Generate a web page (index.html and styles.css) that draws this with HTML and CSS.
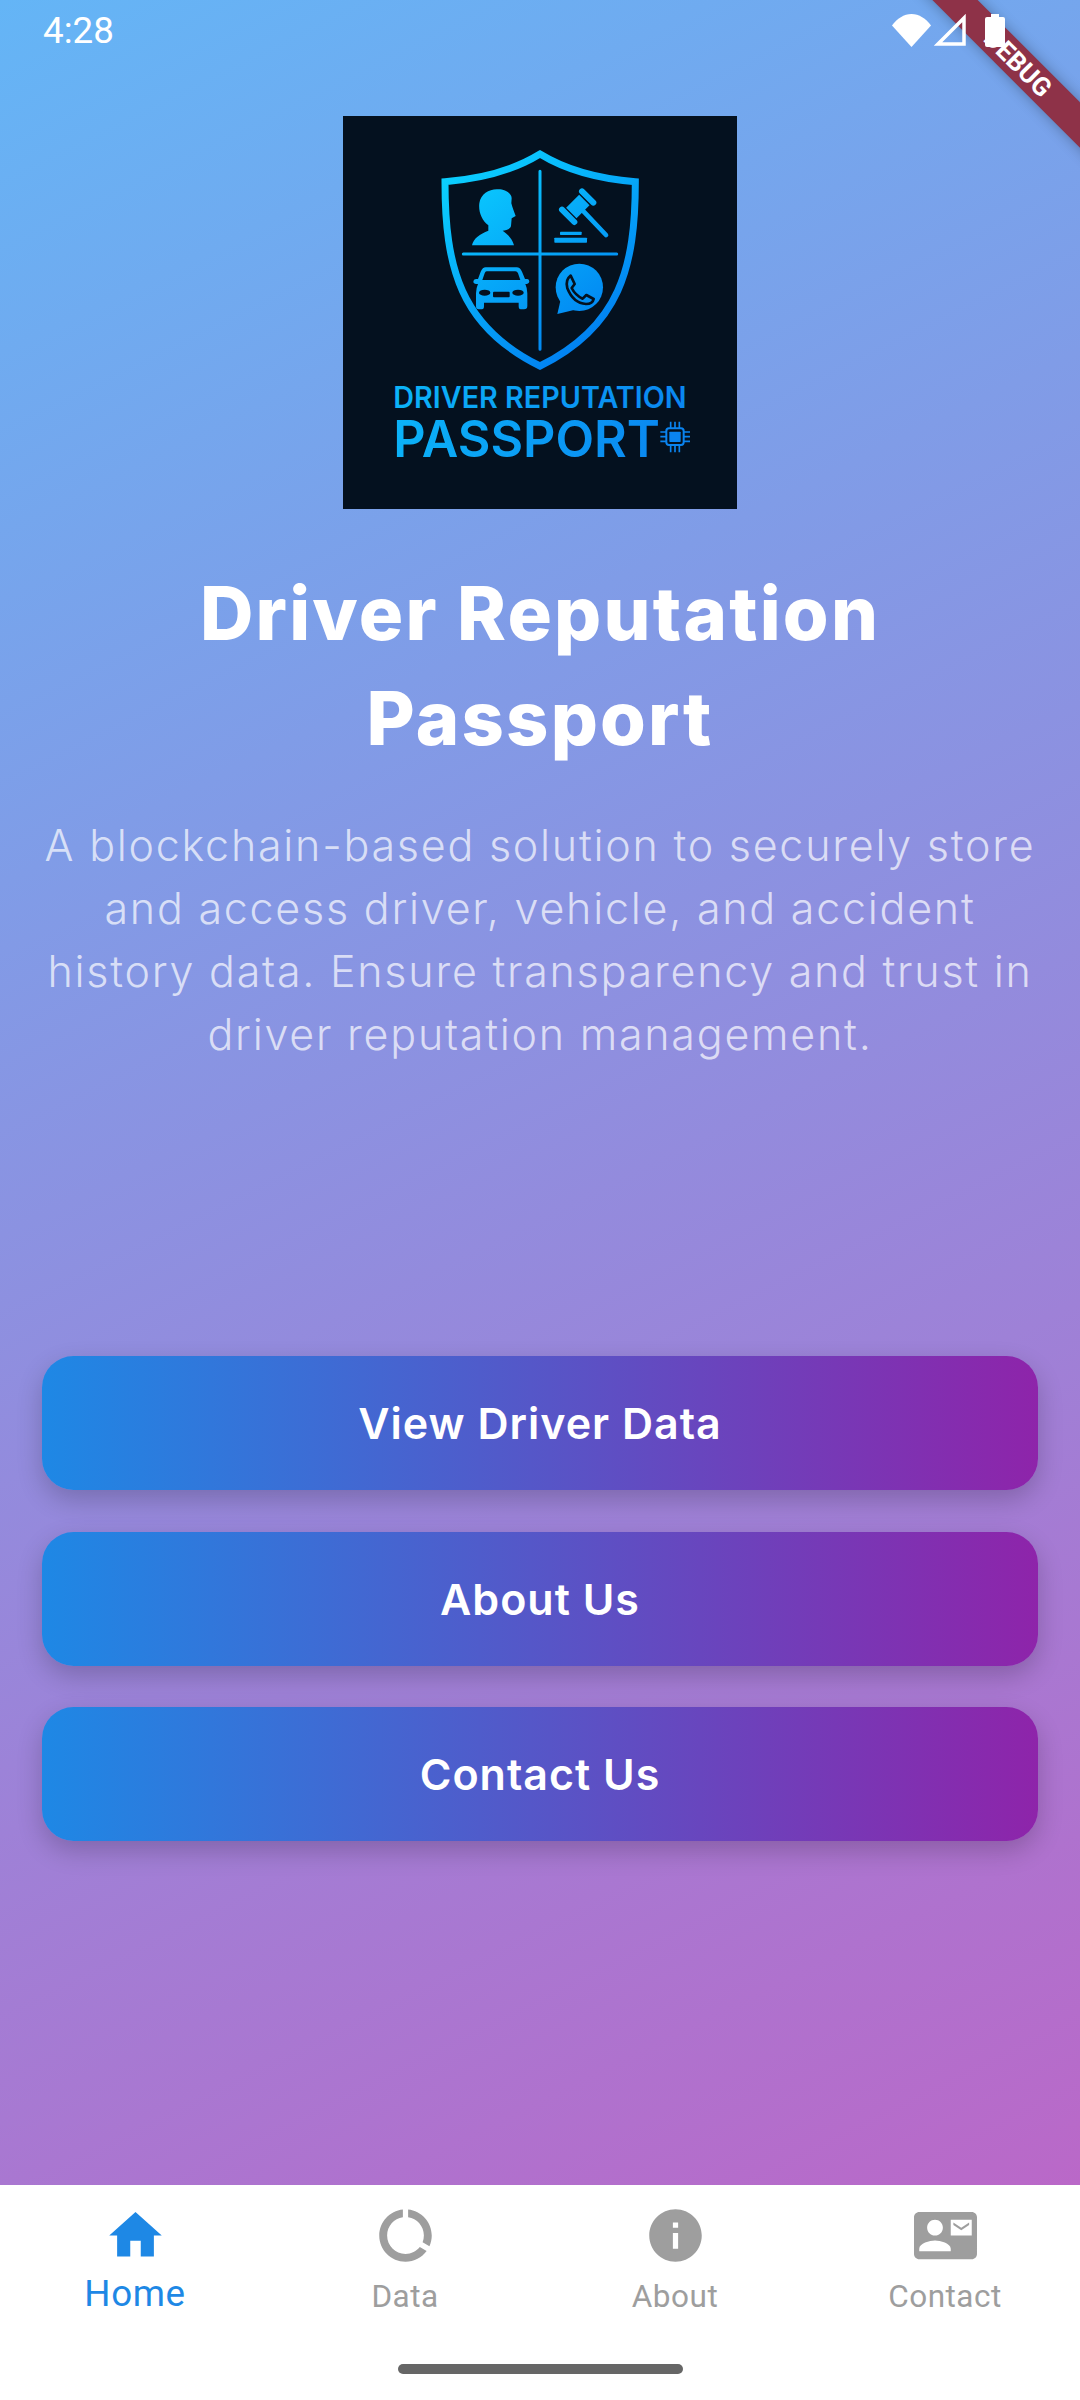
FILE: index.html
```html
<!DOCTYPE html>
<html lang="en">
<head>
<meta charset="utf-8">
<title>Driver Reputation Passport</title>
<link rel="stylesheet" href="styles.css">
</head>
<body>
<div class="app">
  <main class="main">
    <header class="status">
      <span class="time">4:28</span>
      <div class="status-icons">
        <svg class="ic-wifi" viewBox="0 0 39 33"><path d="M0 11.5C5 4.5 12 0 19.5 0S34 4.5 39 11.5L19.5 33Z"/></svg>
        <svg class="ic-signal" viewBox="0 0 32 32"><path d="M30 4V30H4Z"/></svg>
        <svg class="ic-battery" viewBox="0 0 20 33"><path d="M6 0H14V3H18Q20 3 20 5V31Q20 33 18 33H2Q0 33 0 31V5Q0 3 2 3H6Z"/></svg>
      </div>
    </header>
    <svg class="logo" viewBox="69 48 1182 1179" role="img" aria-label="Driver Reputation Passport logo">
      <defs>
        <linearGradient id="lg" gradientUnits="userSpaceOnUse" x1="420" y1="200" x2="860" y2="790">
          <stop offset="0" stop-color="#0bd0ff"/>
          <stop offset="1" stop-color="#0078f0"/>
        </linearGradient>
        <linearGradient id="tg" gradientUnits="userSpaceOnUse" x1="220" y1="860" x2="1100" y2="1070">
          <stop offset="0" stop-color="#0bb4f8"/>
          <stop offset="1" stop-color="#0a84f0"/>
        </linearGradient>
      </defs>
      <rect class="logo-bg" x="69" y="48" width="1182" height="1179"/>
      <path class="shield" d="M660 162C590 205 490 236 375 245C375 500 420 680 660 798C900 680 946 500 946 245C830 236 730 205 660 162Z"/>
      <path class="cross" d="M660 214V748M430 462H890"/>
      <path class="art" d="M456 436C460 415 480 402 505 392L505 376C485 360 475 335 478 310C482 280 510 266 535 268C555 268 575 280 575 295L574 310C578 325 582 335 587 348L575 355L573 378C570 390 555 390 548 392C558 400 576 412 582 436Z"/>
      <path class="gavel-bar" d="M786 274L820 308M726 329L763 366"/>
      <path class="gavel-body" d="M793 300L754 339"/>
      <path class="gavel-handle" d="M785 328L858 405"/>
      <rect class="art" x="720" y="395" width="65" height="10" rx="2"/>
      <rect class="art" x="703" y="413" width="98" height="15" rx="2"/>
      <path class="art" d="M497 502H590Q600 502 606 515L615 537H622Q628 538 628 545Q626 552 616 552Q622 565 622 580V618Q622 628 612 628H602Q596 628 596 618V608H492V618Q492 628 486 628H476Q468 628 468 618V580Q468 565 474 552Q460 552 460 545Q460 538 468 537H474L482 515Q488 502 497 502Z"/>
      <path class="cut" d="M500 514H586Q592 514 594 520L601 540H487L494 520Q496 514 500 514Z"/>
      <ellipse class="cut" cx="494" cy="578" rx="17" ry="9"/>
      <ellipse class="cut" cx="594" cy="578" rx="17" ry="9"/>
      <rect class="cut" x="519" y="575" width="50" height="17" rx="3"/>
      <circle class="art" cx="778" cy="562" r="71"/>
      <path class="art" d="M712 642L724 590L762 630Z"/>
      <path class="phone" d="M752 527L764 552L755 564Q766 586 788 596L799 585L821 597Q818 612 798 612Q760 610 742 565Q735 540 752 527Z"/>
      <text class="logo-t1" x="220" y="923" textLength="880" lengthAdjust="spacingAndGlyphs">DRIVER REPUTATION</text>
      <text class="logo-t2" x="220" y="1070" textLength="800" lengthAdjust="spacingAndGlyphs">PASSPORT</text>
      <rect class="chip" x="1039" y="985" width="52" height="50" rx="8"/>
      <rect class="chip-core" x="1048" y="995" width="34" height="31" rx="2"/>
      <path class="chip-pins" d="M1052 965V985M1065 965V985M1078 965V985M1052 1035V1057M1065 1035V1057M1078 1035V1057M1021 996H1039M1021 1010H1039M1021 1024H1039M1091 996H1110M1091 1010H1110M1091 1024H1110"/>
    </svg>
    <h1 class="title">Driver Reputation<br>Passport</h1>
    <p class="desc">A blockchain-based solution to securely store<br>and access driver, vehicle, and accident<br>history data. Ensure transparency and trust in<br>driver reputation management.</p>
    <div class="actions">
      <button class="btn">View Driver Data</button>
      <button class="btn">About Us</button>
      <button class="btn">Contact Us</button>
    </div>
  </main>
  <nav class="nav">
    <div class="tabs">
      <div class="tab active">
        <svg class="tab-ic" viewBox="0 0 24 24"><path d="M10 20v-6h4v6h5v-8h3L12 3 2 12h3v8z"/></svg>
        <span class="tab-label">Home</span>
      </div>
      <div class="tab">
        <svg class="tab-ic" viewBox="0 0 24 24"><path d="M13 2.05v3.03c3.39.49 6 3.39 6 6.92 0 .9-.18 1.75-.48 2.54l2.6 1.53c.56-1.24.88-2.62.88-4.07 0-5.18-3.95-9.45-9-9.95zM12 19c-3.87 0-7-3.13-7-7 0-3.53 2.61-6.43 6-6.92V2.05c-5.05.5-9 4.76-9 9.95 0 5.52 4.47 10 9.99 10 3.31 0 6.24-1.61 8.06-4.09l-2.6-1.53C16.17 17.98 14.21 19 12 19z"/></svg>
        <span class="tab-label">Data</span>
      </div>
      <div class="tab">
        <svg class="tab-ic" viewBox="0 0 24 24"><path d="M12 2C6.48 2 2 6.48 2 12s4.48 10 10 10 10-4.48 10-10S17.52 2 12 2zm1 15h-2v-6h2v6zm0-8h-2V7h2v2z"/></svg>
        <span class="tab-label">About</span>
      </div>
      <div class="tab">
        <svg class="tab-ic" viewBox="0 0 24 24"><path d="M21 8V7l-3 2-3-2v1l3 2 3-2zm1-5H2C.9 3 0 3.9 0 5v14c0 1.1.9 2 2 2h20c1.1 0 1.99-.9 1.99-2L24 5c0-1.1-.9-2-2-2zM8 6c1.66 0 3 1.34 3 3s-1.34 3-3 3-3-1.34-3-3 1.34-3 3-3zm6 12H2v-1c0-2 4-3.1 6-3.1s6 1.1 6 3.1v1zm8-6h-8V6h8v6z"/></svg>
        <span class="tab-label">Contact</span>
      </div>
    </div>
    <div class="gesture"></div>
  </nav>
  <div class="debug"><span>DEBUG</span></div>
</div>
</body>
</html>
```
FILE: styles.css
```css
* { box-sizing: border-box; }
html, body { margin: 0; padding: 0; }
body { width: 1080px; height: 2400px; overflow: hidden; font-family: "Inter", "Liberation Sans", sans-serif; }
.app { position: relative; width: 1080px; height: 2400px; overflow: hidden; display: flex; flex-direction: column; background: #fff; }

.main { height: 2185px; display: flex; flex-direction: column; align-items: center; padding: 0 42px; background: linear-gradient(153.7deg, #64b5f6 0%, #ba68c8 100%); }

.status { width: 1080px; margin: 0 -42px; height: 62px; padding: 14px 75px 0 43px; display: flex; justify-content: space-between; align-items: flex-start; color: #fff; position: relative; z-index: 3; }
.time { font-family: "Roboto", sans-serif; font-size: 36.75px; line-height: 34px; }
.status-icons { display: flex; align-items: flex-start; }
.status-icons svg { fill: #fff; display: block; }
.ic-wifi { width: 39px; height: 33px; margin-right: 3px; }
.ic-signal { width: 32px; height: 32px; margin-right: 19px; fill: none !important; stroke: #fff; stroke-width: 3.5; }
.ic-battery { width: 20px; height: 33px; }

.logo { display: block; width: 394px; height: 393px; margin-top: 54px; flex: none; }
.logo-bg { fill: #04111f; }
.shield { fill: none; stroke: url(#lg); stroke-width: 21; stroke-linejoin: miter; }
.cross { fill: none; stroke: url(#lg); stroke-width: 9; stroke-linecap: round; }
.art { fill: url(#lg); }
.cut { fill: #04111f; }
.gavel-bar { fill: none; stroke: url(#lg); stroke-width: 18; stroke-linecap: round; }
.gavel-body { fill: none; stroke: url(#lg); stroke-width: 44; }
.gavel-handle { fill: none; stroke: url(#lg); stroke-width: 14; stroke-linecap: round; }
.phone { fill: none; stroke: #04111f; stroke-width: 8; stroke-linejoin: round; }
.logo-t1 { font-family: "Inter", sans-serif; font-weight: 600; font-size: 89px; fill: url(#tg); }
.logo-t2 { font-family: "Inter", sans-serif; font-weight: 600; font-size: 154px; fill: url(#tg); }
.chip { fill: none; stroke: #0a84f0; stroke-width: 6; }
.chip-core { fill: #0a84f0; }
.chip-pins { fill: none; stroke: #0a84f0; stroke-width: 5; }

.title { margin: 52px 0 0; font-size: 74px; line-height: 105px; font-weight: 800; letter-spacing: 2.2px; color: #fff; text-align: center; }
.desc { margin: 43px 0 0; font-size: 43px; line-height: 63px; font-weight: 300; letter-spacing: 1.75px; color: rgba(255, 255, 255, 0.7); text-align: center; white-space: nowrap; }

.actions { margin-top: 290px; width: 996px; display: flex; flex-direction: column; gap: 41.5px; }
.btn { height: 134px; border: 0; border-radius: 31.5px; background: linear-gradient(90deg, #1e88e5, #8e24aa); box-shadow: 0 10px 26px rgba(0, 0, 0, 0.2); color: #fff; font-family: inherit; font-size: 43px; font-weight: 600; letter-spacing: 1px; text-align: center; padding: 0; }

.nav { flex: 1; background: #fff; display: flex; flex-direction: column; align-items: center; }
.tabs { width: 1080px; display: grid; grid-template-columns: repeat(4, 1fr); padding-top: 19px; height: 179px; }
.tab { display: flex; flex-direction: column; align-items: center; color: #9e9e9e; }
.tab.active { color: #1e88e5; }
.tab-ic { width: 63px; height: 63px; fill: currentColor; display: block; }
.tab-label { font-family: "Roboto", sans-serif; font-size: 31.5px; line-height: 37px; margin-top: 11px; letter-spacing: 0.5px; }
.active .tab-label { font-size: 36.75px; line-height: 42px; margin-top: 6px; letter-spacing: 0.6px; }
.gesture { width: 285px; height: 10px; border-radius: 5px; background: #666; }

.debug { position: absolute; left: 817.5px; top: 47px; width: 400px; height: 32px; transform: rotate(45deg); background: #8e3248; box-shadow: 0 0 14px rgba(0, 0, 0, 0.3); display: flex; align-items: center; justify-content: center; z-index: 2; }
.debug span { font-family: "Roboto", sans-serif; font-weight: 700; font-size: 26px; line-height: 32px; color: #fff; }
```
